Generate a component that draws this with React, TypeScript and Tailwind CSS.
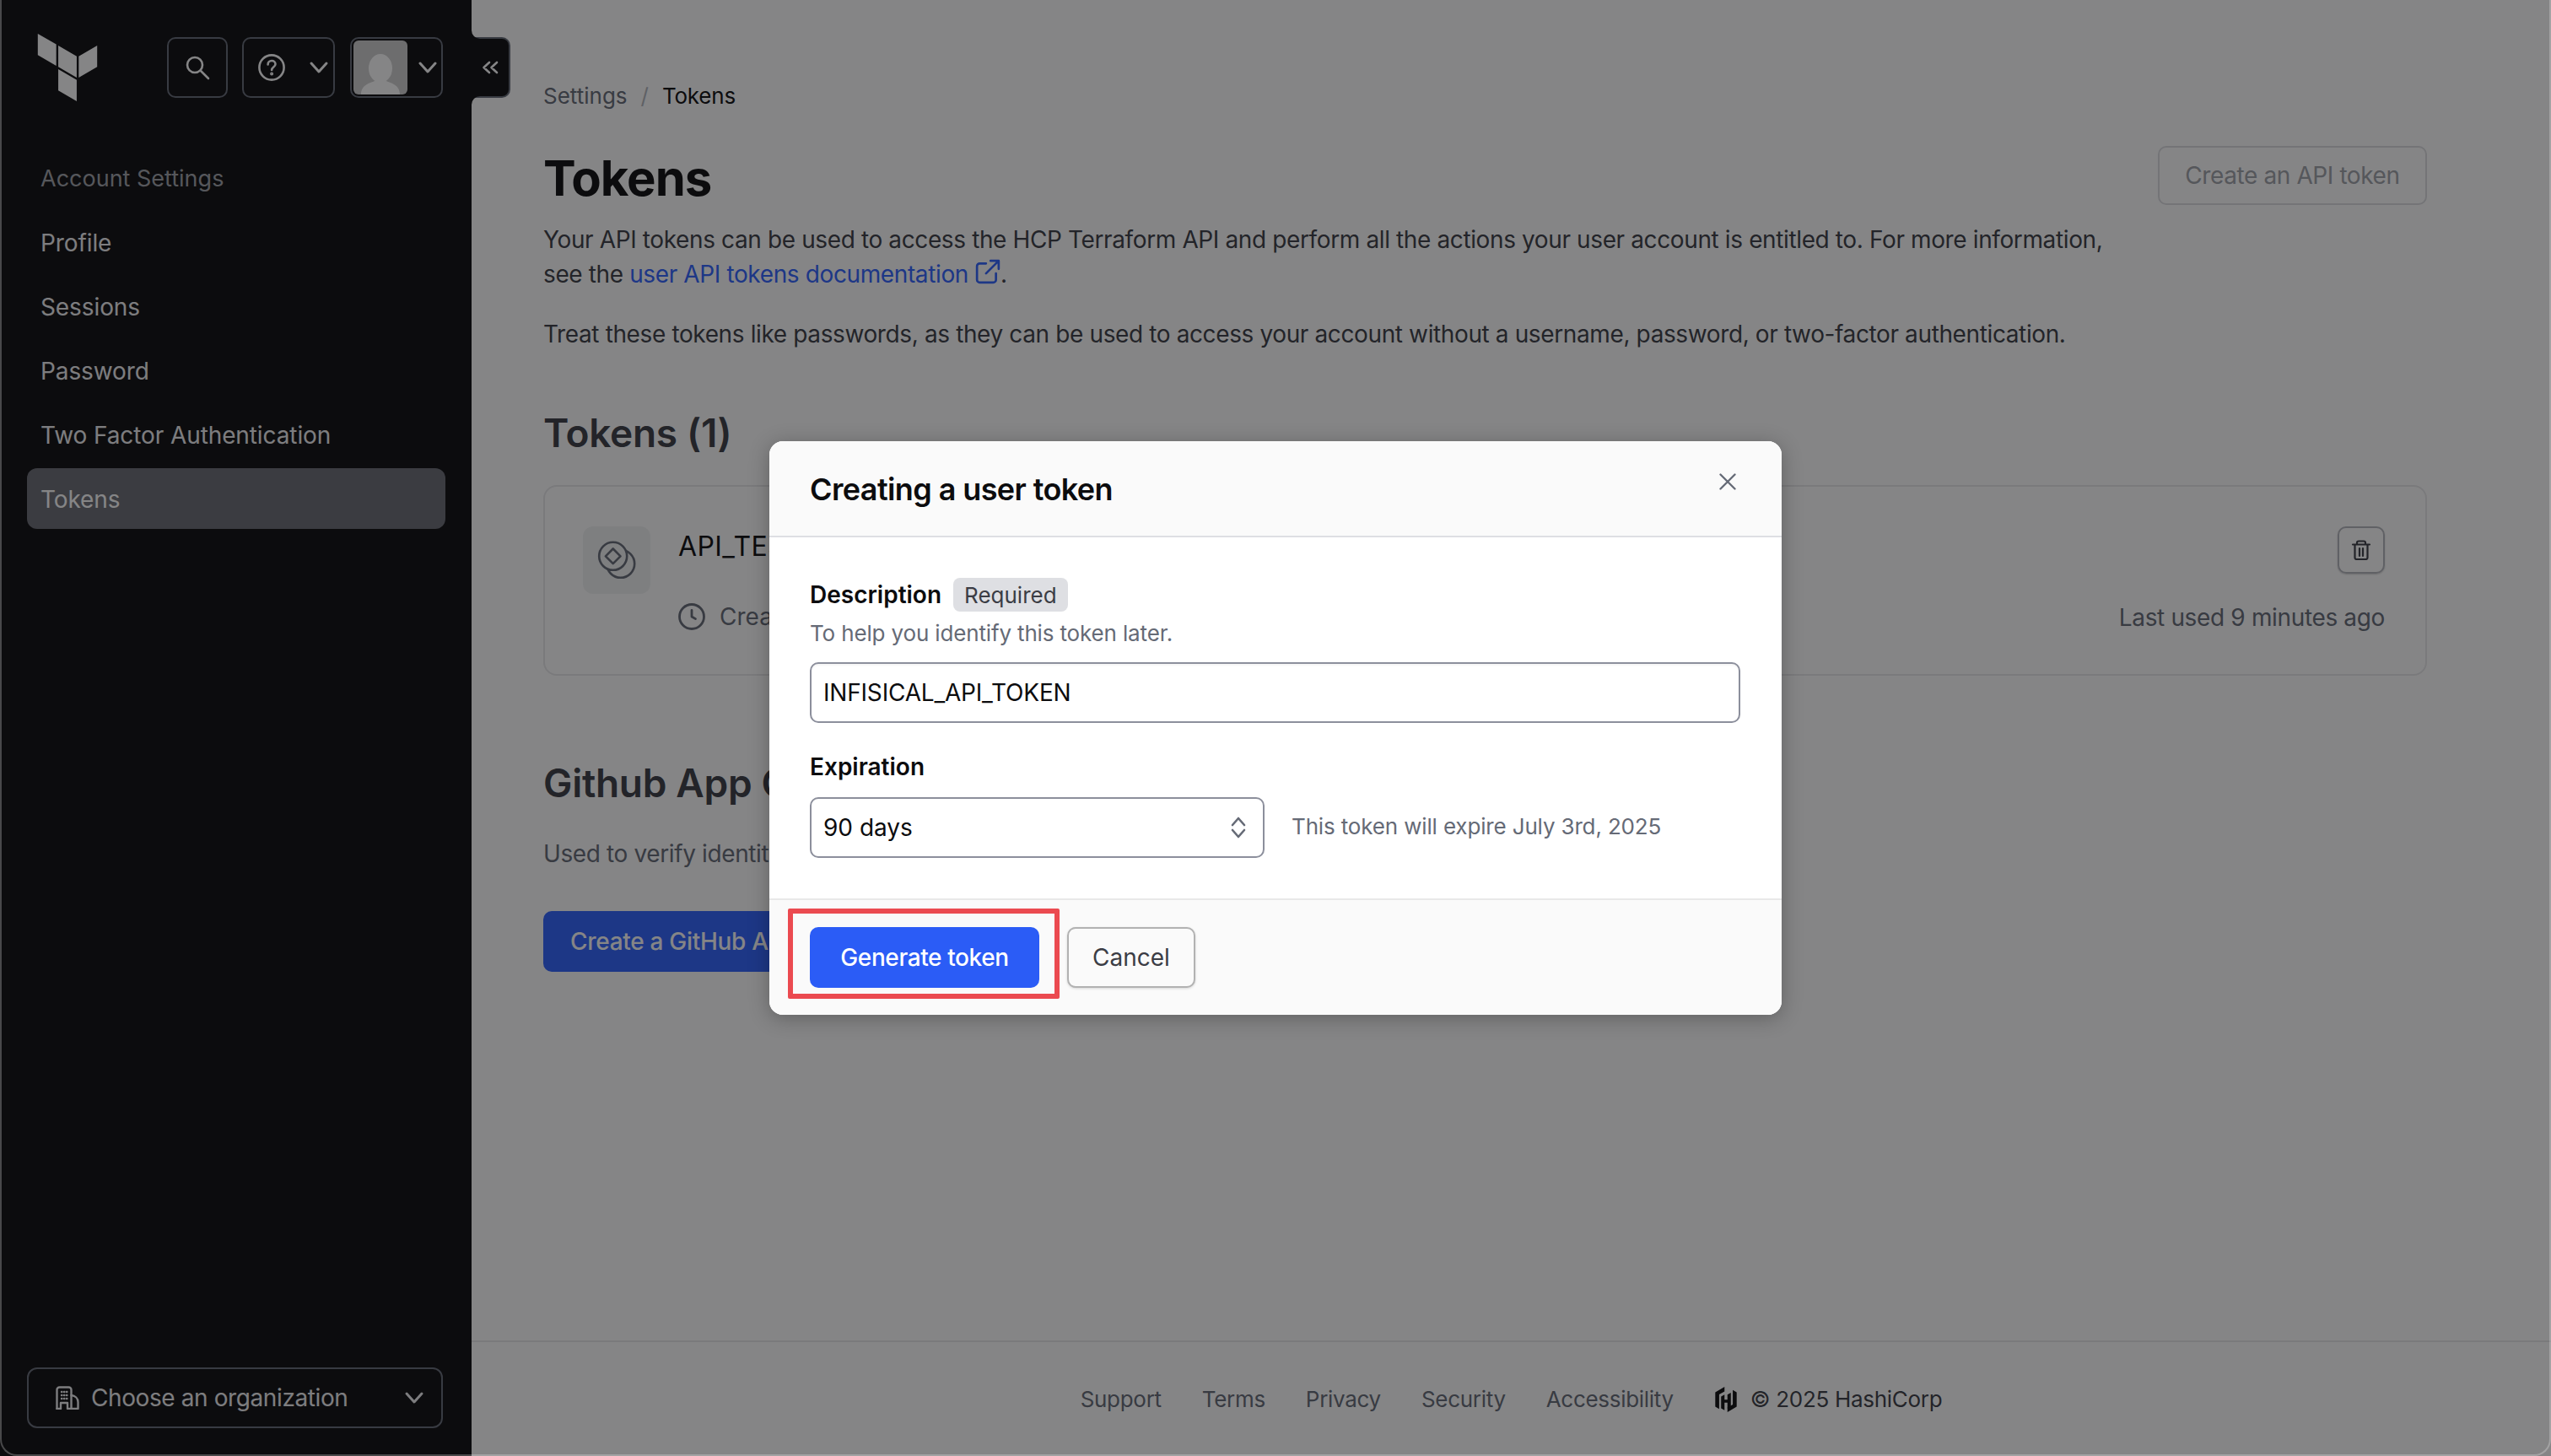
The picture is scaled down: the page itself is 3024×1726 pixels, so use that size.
const navItems = ['Profile', 'Sessions', 'Password', 'Two Factor Authentication', 'Tokens'];
const footerLinks = ['Support', 'Terms', 'Privacy', 'Security', 'Accessibility'];

function Chevron({ className }: { className?: string }) {
  return (
    <svg width="24" height="16" viewBox="0 0 24 16" fill="none" stroke="currentColor" strokeWidth="3" strokeLinecap="round" strokeLinejoin="round" className={className}>
      <path d="M3 3l9 10 9-10" />
    </svg>
  );
}

function Sidebar() {
  return (
    <aside className="relative flex w-[559px] shrink-0 flex-col bg-[#0c0c0e] text-[#efeff1]">
      {/* header row */}
      <div className="mt-[40px] flex h-[80px] items-center pl-[40px]">
        <svg width="80" height="80" viewBox="0 0 24 24" fill="#ffffff">
          <path d="M1.44 0v7.575l6.561 3.79V3.787zm21.12 4.227l-6.561 3.791v7.574l6.56-3.787zM8.72 4.23v7.575l6.561 3.787V8.018zm0 8.405v7.575L15.28 24v-7.578z" />
        </svg>
        <div className="ml-[78px] flex items-center">
          <button className="flex h-[72px] w-[72px] items-center justify-center rounded-[10px] border-2 border-[#656a76] text-white">
            <svg width="32" height="32" viewBox="0 0 32 32" fill="none" stroke="currentColor" strokeWidth="2.6" strokeLinecap="round">
              <circle cx="13" cy="13" r="9" />
              <path d="M20 20l9 9" />
            </svg>
          </button>
          <button className="ml-[17px] flex h-[72px] w-[110px] items-center rounded-[10px] border-2 border-[#656a76] pl-[16px] text-white">
            <svg width="34" height="34" viewBox="0 0 34 34" fill="none" stroke="currentColor" strokeWidth="2.6" strokeLinecap="round">
              <circle cx="17" cy="17" r="14.6" />
              <path d="M12.6 13.4c0-2.6 2-4.4 4.5-4.4s4.4 1.7 4.4 3.9c0 3.4-4.4 3.7-4.4 7" />
              <circle cx="17.1" cy="24.4" r="0.7" fill="currentColor" />
            </svg>
            <Chevron className="ml-[27px]" />
          </button>
          <button className="ml-[18px] flex h-[72px] w-[110px] items-center rounded-[10px] border-2 border-[#656a76] pl-[2px] text-white">
            <svg width="64" height="64" viewBox="0 0 64 64" className="rounded-[6px] bg-[#cecece]">
              <ellipse cx="32" cy="33" rx="14" ry="17" fill="#ffffff" />
              <path d="M9 64C9 52 20 50 32 46c12 4 23 6 23 18z" fill="#ffffff" />
            </svg>
            <Chevron className="ml-[12px]" />
          </button>
        </div>
      </div>

      <div className="mt-[72px] pl-[48px] text-[27px] leading-[40px] text-[#a0a3a9]">Account Settings</div>

      <nav className="mx-[32px] mt-[19px] flex w-[496px] flex-col gap-[4px]">
        {navItems.map((item) => (
          <a
            key={item}
            className={
              item === 'Tokens'
                ? 'flex h-[72px] items-center rounded-[12px] bg-[#6a6c74] pl-[16px] pt-[2px] text-[28px] tracking-[-0.1px] text-white'
                : 'flex h-[72px] items-center rounded-[12px] pl-[16px] pt-[2px] text-[28px] tracking-[-0.1px]'
            }
          >
            {item}
          </a>
        ))}
      </nav>

      {/* organization switcher */}
      <button className="mx-[32px] mb-[33px] mt-auto flex h-[72px] w-[493px] items-center rounded-[12px] border-2 border-[#656a76] pl-[32px] pr-[20px] text-[28px] tracking-[-0.4px]">
        <svg width="28" height="28" viewBox="0 0 28 28" fill="none" stroke="currentColor" strokeWidth="2.4" strokeLinecap="round" strokeLinejoin="round">
          <path d="M1.5 27V4.5a3 3 0 0 1 3-3h11a3 3 0 0 1 3 3V27" />
          <path d="M18.5 11c4.5.5 8 3.5 8 8v8h-8" />
          <path d="M1.5 27h4.5v-7h8v7h4.5" />
          <path d="M7 7h.4M10 7h.4M13 7h.4M7 11h.4M10 11h.4M13 11h.4M7 15h.4M10 15h.4M13 15h.4" />
        </svg>
        <span className="ml-[14px]">Choose an organization</span>
        <Chevron className="ml-auto" />
      </button>

      {/* collapse tab */}
      <div className="absolute left-full top-[44px] flex h-[72px] w-[46px] items-center justify-center rounded-r-[10px] border-2 border-l-0 border-[#656a76] bg-[#0c0c0e]">
        <svg width="20" height="16" viewBox="0 0 20 16" fill="none" stroke="#ffffff" strokeWidth="2.6" strokeLinecap="round" strokeLinejoin="round">
          <path d="M9 2L2.5 8 9 14M18 2l-6.5 6 6.5 6" />
        </svg>
        <svg width="10" height="10" viewBox="0 0 10 10" className="absolute left-0 -top-[10px]">
          <path d="M0 0v10h10A10 10 0 0 1 0 0z" fill="#0c0c0e" />
        </svg>
        <svg width="10" height="10" viewBox="0 0 10 10" className="absolute left-0 -bottom-[10px]">
          <path d="M0 10V0h10A10 10 0 0 0 0 10z" fill="#0c0c0e" />
        </svg>
      </div>
    </aside>
  );
}

function TokenCard() {
  return (
    <div className="mt-[32px] flex h-[226px] justify-between rounded-[16px] border-2 border-[#e8e8ea] pl-[45px] pr-[48px] pt-[47px]">
      <div className="flex">
        <div className="flex h-[80px] w-[80px] items-center justify-center rounded-[12px] bg-[#f1f2f3]">
          <svg width="48" height="48" viewBox="0 0 48 48" fill="none" stroke="#656a76" strokeWidth="2.6" strokeLinejoin="round">
            <circle cx="28.7" cy="28.3" r="16.5" />
            <circle cx="19.7" cy="19.3" r="16.5" fill="#f1f2f3" />
            <path d="M19.7 10.5l8.8 8.8-8.8 8.8-8.8-8.8z" />
          </svg>
        </div>
        <div className="ml-[33px]">
          <div className="mt-[2px] text-[32px] leading-[44px] tracking-[0.4px] text-[#0c0c0e]">API_TEST_TOKEN</div>
          <div className="mt-[41px] flex items-center text-[28px] leading-[40px] text-[#656a76]">
            <svg width="32" height="32" viewBox="0 0 32 32" fill="none" stroke="currentColor" strokeWidth="2.8" strokeLinecap="round" strokeLinejoin="round">
              <circle cx="16" cy="16" r="14.5" />
              <path d="M16 8.5V16l4.5 2.6" />
            </svg>
            <span className="ml-[17px]">Created April 4th, 2025</span>
          </div>
        </div>
      </div>
      <div className="flex flex-col items-end">
        <button className="flex h-[56px] w-[56px] items-center justify-center rounded-[10px] border-2 border-[#b4b6bc] shadow-[0_1px_2px_rgba(0,0,0,0.2)]">
          <svg width="24" height="24" viewBox="0 0 24 24" fill="none" stroke="#3b3d45" strokeWidth="2.2" strokeLinecap="round" strokeLinejoin="round">
            <path d="M2 5.5h20M7 5.5V3.5a2 2 0 0 1 2-2h6a2 2 0 0 1 2 2v2M4.5 5.5V21a2 2 0 0 0 2 2h11a2 2 0 0 0 2-2V5.5M10 10v9M14 10v9" />
          </svg>
        </button>
        <div className="mt-[32px] text-[28px] leading-[40px] tracking-[-0.35px] text-[#656a76]">Last used 9 minutes ago</div>
      </div>
    </div>
  );
}

function Main() {
  return (
    <main className="flex min-w-0 flex-1 flex-col bg-white">
      <div className="flex-1 pl-[85px] pr-[147px] pt-[95px]">
        <div className="flex h-[36px] items-center text-[26px] text-[#656a76]">
          <span>Settings</span>
          <span className="mx-[16px] text-[#b2b6bd]">/</span>
          <span className="tracking-[-0.2px] text-[#0c0c0e]">Tokens</span>
        </div>

        <div className="mt-[42px] flex items-start justify-between">
          <h1 className="text-[58px] font-bold leading-[76px] tracking-[-1px] text-[#0c0c0e]">Tokens</h1>
          <button className="h-[70px] w-[319px] rounded-[10px] border-2 border-[#dcdde0] text-[28px] tracking-[-0.4px] text-[#9fa2a9]">
            Create an API token
          </button>
        </div>

        <p className="mt-[15px] max-w-[1880px] text-[28px] leading-[40.5px] tracking-[-0.38px] text-[#3b3d45]">
          Your API tokens can be used to access the HCP Terraform API and perform all the actions your user account is entitled to. For more information, see the{' '}
          <a className="text-[#2f62ff]">
            user API tokens documentation
            <svg width="30" height="30" viewBox="0 0 28 28" fill="none" stroke="currentColor" strokeWidth="2.5" strokeLinecap="round" strokeLinejoin="round" className="ml-[8px] inline-block align-[-2px]">
              <path d="M12 5H5a3 3 0 0 0-3 3v15a3 3 0 0 0 3 3h15a3 3 0 0 0 3-3v-7" />
              <path d="M12 16L26 2M17 2h9v9" />
            </svg>
          </a>
          .
        </p>
        <p className="mt-[31px] text-[28px] leading-[41px] tracking-[-0.38px] text-[#3b3d45]">
          Treat these tokens like passwords, as they can be used to access your account without a username, password, or two-factor authentication.
        </p>

        <h2 className="mt-[66px] text-[46px] font-semibold leading-[60px] tracking-[-0.3px] text-[#3b3d45]">Tokens (1)</h2>
        <TokenCard />

        <h2 className="mt-[97px] text-[46px] font-semibold leading-[60px] tracking-[-0.3px] text-[#3b3d45]">Github App OAuth Token</h2>
        <p className="mt-[34px] text-[28px] leading-[41px] tracking-[-0.38px] text-[#656a76]">Used to verify identity with the GitHub App.</p>
        <button className="mt-[47px] h-[72px] rounded-[10px] bg-[#2f62ff] px-[32px] text-[28px] font-medium tracking-[-0.3px] text-white">
          Create a GitHub App token
        </button>
      </div>

      <footer className="flex h-[137px] items-center justify-center gap-[48px] border-t-2 border-[#e8e8ea] text-[26px] tracking-[-0.3px] text-[#656a76]">
        {footerLinks.map((link) => (
          <a key={link}>{link}</a>
        ))}
        <div className="flex items-center text-[#3b3d45]">
          <svg width="28" height="30" viewBox="0 0 24 26" fill="#0c0c0e">
            <path d="M10.5 0L1 5.6v14.8l4 2.3V7.9l5.5-3.2zM19 3.3v14.8l-5.5 3.2V26l9.5-5.6V5.6z" />
            <path d="M10.5 8v5.2h3V8l3.5-2v14l-3.5 2v-5.8h-3V24L7 22V10z" />
          </svg>
          <span className="ml-[15px]">© 2025 HashiCorp</span>
        </div>
      </footer>
    </main>
  );
}

function TokenModal() {
  return (
    <div className="relative flex w-[1200px] flex-col rounded-[16px] bg-white shadow-[0_4px_24px_rgba(0,0,0,0.28)]">
      <div className="flex h-[114px] items-start justify-between rounded-t-[16px] border-b-2 border-[#dedfe3] bg-[#fafafa] pl-[48px] pr-[54px]">
        <h3 className="mt-[37px] text-[36px] font-semibold leading-[40px] tracking-[-0.6px] text-[#0c0c0e]">Creating a user token</h3>
        <svg width="20" height="20" viewBox="0 0 20 20" fill="none" stroke="#656a76" strokeWidth="2.4" strokeLinecap="round" className="mt-[38px]">
          <path d="M1.5 1.5l17 17M18.5 1.5l-17 17" />
        </svg>
      </div>

      <div className="h-[428px] pl-[48px] pr-[49px] pt-[48px]">
        <div className="flex h-[40px] items-center">
          <span className="text-[28px] font-semibold text-[#0c0c0e]">Description</span>
          <span className="ml-[14px] flex h-[40px] items-center rounded-[8px] bg-[#dedfe3] px-[13px] text-[26px] text-[#3b3d45]">Required</span>
        </div>
        <div className="mt-[8px] text-[26px] leading-[36px] tracking-[-0.15px] text-[#656a76]">To help you identify this token later.</div>
        <input
          readOnly
          value="INFISICAL_API_TOKEN"
          className="mt-[16px] block h-[72px] w-full rounded-[10px] border-2 border-[#8c8f9c] bg-white px-[14px] text-[28px] tracking-[-0.2px] text-[#0c0c0e] shadow-[inset_0_2px_2px_rgba(0,0,0,0.04)]"
        />
        <div className="mt-[32px] text-[28px] font-semibold leading-[40px] text-[#0c0c0e]">Expiration</div>
        <div className="mt-[16px] flex items-center">
          <div className="flex h-[72px] w-[539px] items-center justify-between rounded-[10px] border-2 border-[#8c8f9c] pl-[14px] pr-[20px] text-[28px] text-[#0c0c0e]">
            <span>90 days</span>
            <svg width="18" height="26" viewBox="0 0 18 26" fill="none" stroke="#656a76" strokeWidth="2.6" strokeLinecap="round" strokeLinejoin="round">
              <path d="M2 10l7-8 7 8M2 16l7 8 7-8" />
            </svg>
          </div>
          <span className="mb-[4px] ml-[32px] text-[26px] tracking-[-0.15px] text-[#656a76]">This token will expire July 3rd, 2025</span>
        </div>
      </div>

      <div className="relative flex h-[138px] items-start gap-[33px] rounded-b-[16px] border-t-2 border-[#e8e8e8] bg-[#fafafa] pl-[48px] pt-[32px]">
        <button className="h-[72px] w-[272px] rounded-[10px] bg-[#2b5cf6] text-[28px] font-medium tracking-[-0.4px] text-white">Generate token</button>
        <button className="h-[72px] w-[152px] rounded-[10px] border-2 border-[#b2b2b2] bg-[#fafafa] text-[28px] text-[#3b3d45] shadow-[0_1px_3px_rgba(0,0,0,0.15)]">Cancel</button>
        {/* red highlight drawn around the primary action */}
        <div className="pointer-events-none absolute left-[22px] top-[10px] h-[107px] w-[322px] rounded-[2px] border-[6px] border-[#eb4a50]" />
      </div>
    </div>
  );
}

export default function App() {
  return (
    <div className="relative flex h-screen w-screen overflow-hidden bg-white font-['Inter',sans-serif]">
      <Sidebar />
      <Main />
      {/* modal backdrop */}
      <div className="absolute inset-0 flex items-center justify-center bg-[#0c0c0e]/50">
        <TokenModal />
      </div>
      {/* window edge */}
      <div className="pointer-events-none absolute inset-0 rounded-b-[20px] border-x-2 border-b-2 border-white/25" />
    </div>
  );
}
